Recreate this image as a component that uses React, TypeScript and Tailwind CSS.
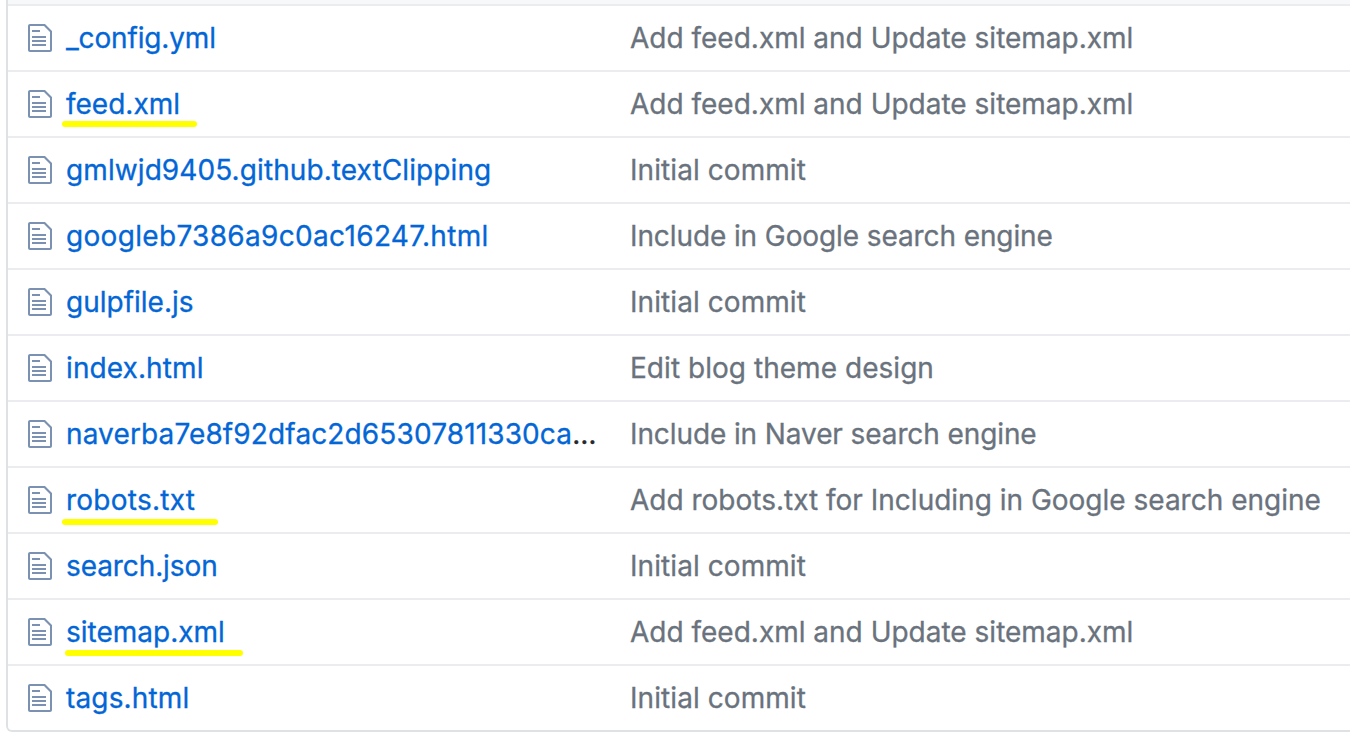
import React from "react";

type Row = { name: string; message: string; track?: string; messageTrack?: string; mark?: string; cut?: boolean };

const rows: Row[] = [
  { name: "_config.yml", message: "Add feed.xml and Update sitemap.xml", track: "tracking-[-0.15px]" },
  { name: "feed.xml", message: "Add feed.xml and Update sitemap.xml", mark: "left-[54px] top-[49px] w-[135px]" },
  { name: "gmlwjd9405.github.textClipping", message: "Initial commit", track: "tracking-[0.09px]", messageTrack: "tracking-[0.07px]" },
  { name: "googleb7386a9c0ac16247.html", message: "Include in Google search engine", track: "tracking-[0.32px]", messageTrack: "tracking-[-0.1px]" },
  { name: "gulpfile.js", message: "Initial commit", messageTrack: "tracking-[0.07px]" },
  { name: "index.html", message: "Edit blog theme design", track: "tracking-[0.1px]", messageTrack: "tracking-[0.04px]" },
  { name: "naverba7e8f92dfac2d65307811330ca", message: "Include in Naver search engine", track: "tracking-[0.13px]", messageTrack: "tracking-[-0.1px]", cut: true },
  { name: "robots.txt", message: "Add robots.txt for Including in Google search engine", track: "tracking-[0.25px]", mark: "left-[54px] top-[51px] w-[156px]" },
  { name: "search.json", message: "Initial commit", track: "tracking-[-0.1px]", messageTrack: "tracking-[0.07px]" },
  { name: "sitemap.xml", message: "Add feed.xml and Update sitemap.xml", mark: "left-[56.5px] top-[49.5px] w-[178.5px]" },
  { name: "tags.html", message: "Initial commit", track: "tracking-[0.15px]", messageTrack: "tracking-[0.07px]" },
];

function FileIcon() {
  return (
    <svg viewBox="0 0 12 16" className="mr-[14px] h-8 w-6 shrink-0 fill-[#7b91b1]" aria-hidden="true">
      <path
        fillRule="evenodd"
        d="M6 5H2V4h4v1zM2 8h7V7H2v1zm0 2h7V9H2v1zm0 2h7v-1H2v1zm10-7.5V14c0 .55-.45 1-1 1H1c-.55 0-1-.45-1-1V2c0-.55.45-1 1-1h7.5L12 4.5zM11 5L8 2H1v12h10V5z"
      />
    </svg>
  );
}

export default function App() {
  return (
    <div className="h-[738px] w-[1350px] overflow-hidden bg-white pl-[6px] font-['Inter',sans-serif] text-[28px] [-webkit-text-stroke:0.3px]">
      <div className="h-[732px] w-[1400px] overflow-hidden rounded-b-[6px] border-2 border-t-0 border-[#dfe2e5]">
        <div className="h-1 bg-[#f6f8fa]" />
        {rows.map((r) => (
          <div key={r.name} className="relative flex h-[66px] items-center border-t-2 border-[#eaecef] pl-5 whitespace-nowrap">
            <FileIcon />
            <div className={`w-[564px] shrink-0 ${r.track ?? ""}`}>
              <span className="text-[#0366d6]">{r.name}</span>
              {r.cut && <span className="text-[#24292e]">…</span>}
            </div>
            <span className={`text-[#6a737d] ${r.messageTrack ?? ""}`}>{r.message}</span>
            {r.mark && <span className={`absolute h-[6px] rounded-full bg-[#ffff00] ${r.mark}`} />}
          </div>
        ))}
      </div>
    </div>
  );
}
